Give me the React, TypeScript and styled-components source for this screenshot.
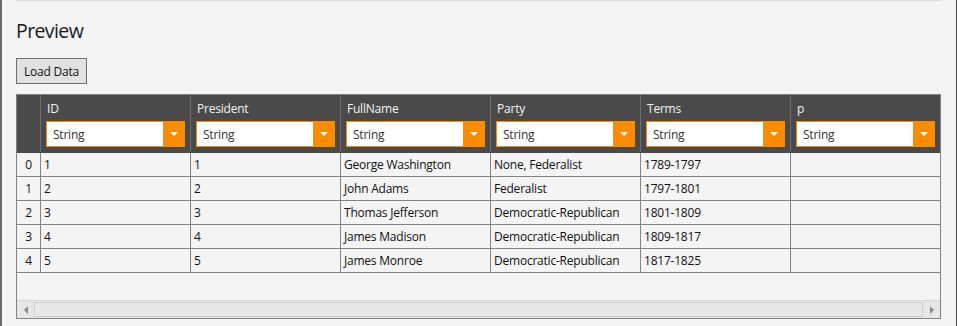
import React from "react";
import styled, { createGlobalStyle } from "styled-components";

const Global = createGlobalStyle`
  html, body { margin: 0; padding: 0; background: #f4f4f4; }
  body { font-family: "Segoe UI", "Open Sans", "Noto Sans", sans-serif; }
  * { box-sizing: border-box; }
`;

const Page = styled.div`
  width: 957px;
  height: 326px;
  background: #f4f4f4;
  border-left: 2px solid #6a6a6a;
  border-right: 1px solid #4a4a4a;
  padding: 0 15px 0 14px;
  display: flex;
  flex-direction: column;
  align-items: flex-start;
  overflow: hidden;
`;

const Divider = styled.div`
  width: 925px;
  height: 1px;
  background: #dcdcdc;
  flex-shrink: 0;
`;

const Heading = styled.h2`
  margin: 16px 0 0 0;
  font-weight: 400;
  font-size: 19.5px;
  letter-spacing: -0.6px;
  line-height: 27px;
  color: #1a1a1a;
`;

const Button = styled.button`
  margin-top: 14px;
  width: 71px;
  height: 26px;
  padding: 0;
  border: 1px solid #707070;
  background: #e1e1e1;
  font-family: inherit;
  font-size: 12px;
  letter-spacing: -0.2px;
  color: #111;
`;

const Grid = styled.div`
  margin-top: 10px;
  width: 925px;
  height: 225px;
  border: 1px solid #828282;
  display: flex;
  flex-direction: column;
  font-size: 12px;
  letter-spacing: -0.22px;
`;

const Row = styled.div<{ $header?: boolean }>`
  display: grid;
  grid-template-columns: 24px repeat(5, 150px) 149px;
  height: ${(p) => (p.$header ? "58px" : "24px")};
  background: ${(p) => (p.$header ? "#4a4a4a" : "#f4f4f4")};
  border-bottom: 1px solid ${(p) => (p.$header ? "#4a4a4a" : "#838383")};
  flex-shrink: 0;
`;

const HeadCell = styled.div<{ $last?: boolean }>`
  border-right: ${(p) => (p.$last ? "none" : "1px solid #707070")};
  padding: 6px 5px 0 5px;
  display: flex;
  flex-direction: column;
  gap: 4px;
`;

const HeadTitle = styled.div`
  color: #f4f4f4;
  line-height: 16px;
  padding-left: 1px;
`;

const Combo = styled.div`
  height: 26px;
  border: 1px solid #fb8c00;
  background: #fff;
  display: flex;
  align-items: center;
`;

const ComboText = styled.span`
  flex: 1;
  padding-left: 6px;
  color: #333;
`;

const ComboButton = styled.span`
  width: 21px;
  height: 100%;
  background: #fb8c00;
  display: flex;
  align-items: center;
  justify-content: center;
`;

const Arrow = styled.span`
  width: 0;
  height: 0;
  border-left: 4px solid transparent;
  border-right: 4px solid transparent;
  border-top: 4px solid #fff;
`;

const Cell = styled.div<{ $index?: boolean; $last?: boolean }>`
  border-right: ${(p) => (p.$last ? "none" : "1px solid #838383")};
  display: flex;
  align-items: center;
  justify-content: ${(p) => (p.$index ? "center" : "flex-start")};
  padding-left: ${(p) => (p.$index ? "0" : "3px")};
  color: #111;
  white-space: nowrap;
  overflow: hidden;
`;

const Empty = styled.div`
  flex: 1;
`;

const ScrollBar = styled.div`
  height: 18px;
  display: flex;
  background: #e8e8e8;
  border-top: 1px solid #d6d6d6;
`;

const ScrollBtn = styled.div<{ $dir: "left" | "right" }>`
  width: 17px;
  display: flex;
  align-items: center;
  justify-content: center;
  background: #e6e6e6;
  &::after {
    content: "";
    width: 0;
    height: 0;
    border-top: 4px solid transparent;
    border-bottom: 4px solid transparent;
    ${(p) =>
      p.$dir === "left"
        ? "border-right: 4px solid #8a8a8a;"
        : "border-left: 4px solid #8a8a8a;"}
  }
`;

const Thumb = styled.div`
  flex: 1;
  margin: 1px 0;
  background: #e8e8e8;
  border: 1px solid #cdcdcd;
`;

const columns = ["ID", "President", "FullName", "Party", "Terms", "p"];

const data: string[][] = [
  ["1", "1", "George Washington", "None, Federalist", "1789-1797", ""],
  ["2", "2", "John Adams", "Federalist", "1797-1801", ""],
  ["3", "3", "Thomas Jefferson", "Democratic-Republican", "1801-1809", ""],
  ["4", "4", "James Madison", "Democratic-Republican", "1809-1817", ""],
  ["5", "5", "James Monroe", "Democratic-Republican", "1817-1825", ""],
];

export default function App() {
  return (
    <>
      <Global />
      <Page>
        <Divider />
        <Heading>Preview</Heading>
        <Button>Load Data</Button>
        <Grid>
          <Row $header>
            <HeadCell />
            {columns.map((c, i) => (
              <HeadCell key={c} $last={i === columns.length - 1}>
                <HeadTitle>{c}</HeadTitle>
                <Combo>
                  <ComboText>String</ComboText>
                  <ComboButton>
                    <Arrow />
                  </ComboButton>
                </Combo>
              </HeadCell>
            ))}
          </Row>
          {data.map((r, ri) => (
            <Row key={ri}>
              <Cell $index>{ri}</Cell>
              {r.map((v, ci) => (
                <Cell key={ci} $last={ci === r.length - 1}>
                  {v}
                </Cell>
              ))}
            </Row>
          ))}
          <Empty />
          <ScrollBar>
            <ScrollBtn $dir="left" />
            <Thumb />
            <ScrollBtn $dir="right" />
          </ScrollBar>
        </Grid>
      </Page>
    </>
  );
}
